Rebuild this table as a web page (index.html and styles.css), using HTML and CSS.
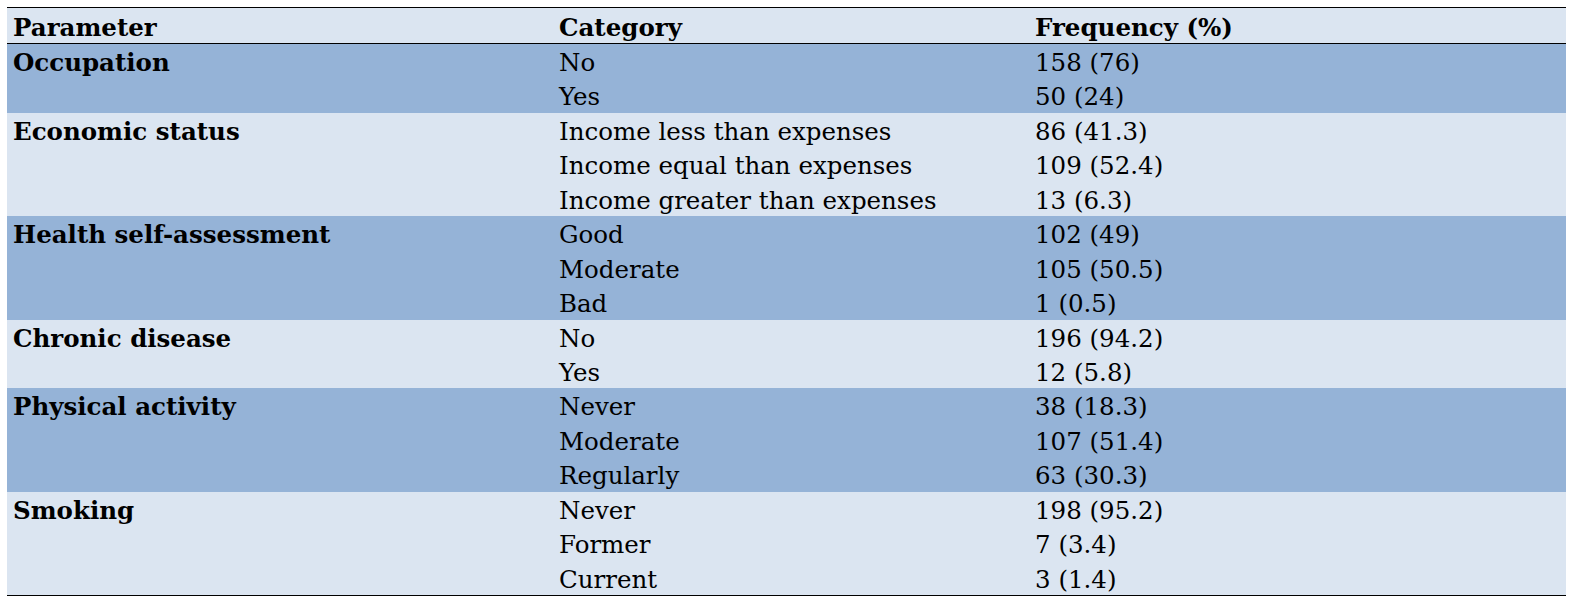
FILE: index.html
```html
<!DOCTYPE html>
<html>
<head>
<meta charset="utf-8">
<link rel="stylesheet" href="styles.css">
</head>
<body>
<table class="data">
  <colgroup><col class="c1"><col class="c2"><col class="c3"></colgroup>
  <thead>
    <tr><th>Parameter</th><th>Category</th><th>Frequency (%)</th></tr>
  </thead>
  <tbody class="dark">
    <tr><td class="param">Occupation</td><td>No</td><td>158 (76)</td></tr>
    <tr><td></td><td>Yes</td><td>50 (24)</td></tr>
  </tbody>
  <tbody class="light">
    <tr><td class="param">Economic status</td><td>Income less than expenses</td><td>86 (41.3)</td></tr>
    <tr><td></td><td>Income equal than expenses</td><td>109 (52.4)</td></tr>
    <tr><td></td><td>Income greater than expenses</td><td>13 (6.3)</td></tr>
  </tbody>
  <tbody class="dark">
    <tr><td class="param">Health self-assessment</td><td>Good</td><td>102 (49)</td></tr>
    <tr><td></td><td>Moderate</td><td>105 (50.5)</td></tr>
    <tr><td></td><td>Bad</td><td>1 (0.5)</td></tr>
  </tbody>
  <tbody class="light">
    <tr><td class="param">Chronic disease</td><td>No</td><td>196 (94.2)</td></tr>
    <tr><td></td><td>Yes</td><td>12 (5.8)</td></tr>
  </tbody>
  <tbody class="dark">
    <tr><td class="param">Physical activity</td><td>Never</td><td>38 (18.3)</td></tr>
    <tr><td></td><td>Moderate</td><td>107 (51.4)</td></tr>
    <tr><td></td><td>Regularly</td><td>63 (30.3)</td></tr>
  </tbody>
  <tbody class="light">
    <tr><td class="param">Smoking</td><td>Never</td><td>198 (95.2)</td></tr>
    <tr><td></td><td>Former</td><td>7 (3.4)</td></tr>
    <tr><td></td><td>Current</td><td>3 (1.4)</td></tr>
  </tbody>
</table>
</body>
</html>
```
FILE: styles.css
```css
html, body {
  margin: 0;
  padding: 0;
  background: #ffffff;
}
body {
  padding: 7px 0 0 7px;
  font-family: "DejaVu Serif", "Liberation Serif", serif;
  font-size: 24.5px;
  color: #000000;
}
.data {
  border-collapse: collapse;
  width: 1559px;
  table-layout: fixed;
  border-top: 1px solid #000;
  border-bottom: 1px solid #000;
}
.c1 { width: 546px; }
.c2 { width: 476px; }
.c3 { width: 537px; }
.data tbody tr {
  height: 34.44px;
}
.data th, .data td {
  padding: 3px 0 0 6px;
  line-height: 31.44px;
  text-align: left;
  vertical-align: top;
  white-space: nowrap;
}
.data thead tr {
  height: 35px;
}
.data thead th {
  font-weight: bold;
  background: #dbe5f1;
  padding-top: 5px;
  line-height: 30px;
  border-bottom: 1px solid #000;
}
.data .param {
  font-weight: bold;
}
.dark td { background: #95b3d7; }
.light td { background: #dbe5f1; }
```
